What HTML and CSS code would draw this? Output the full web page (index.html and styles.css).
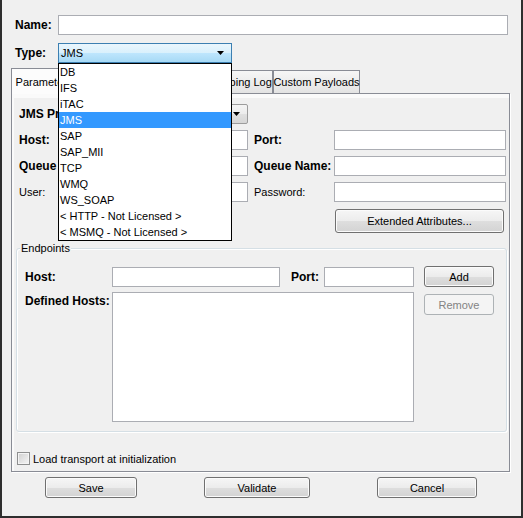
FILE: index.html
```html
<!DOCTYPE html>
<html>
<head>
<meta charset="utf-8">
<title>Transport</title>
<link rel="stylesheet" href="styles.css">
</head>
<body>
<div class="window">
  <div class="row top-row">
    <span class="b top-lbl">Name:</span>
    <div class="field name-field"></div>
  </div>
  <div class="row top-row type-row">
    <span class="b top-lbl">Type:</span>
    <div class="combo-wrap">
      <div class="combo combo-hot">
        <span>JMS</span>
        <svg class="arrow" width="7" height="4" viewBox="0 0 7 4"><path d="M0 0h7L3.5 4z"/></svg>
      </div>
      <ul class="dropdown">
        <li>DB</li>
        <li>IFS</li>
        <li>iTAC</li>
        <li class="sel">JMS</li>
        <li>SAP</li>
        <li>SAP_MII</li>
        <li>TCP</li>
        <li>WMQ</li>
        <li>WS_SOAP</li>
        <li>&lt; HTTP - Not Licensed &gt;</li>
        <li>&lt; MSMQ - Not Licensed &gt;</li>
      </ul>
    </div>
  </div>

  <div class="tabs">
    <div class="tabstrip">
      <div class="tab tab-active t1">Parameters</div>
      <div class="tab t2">Transformations</div>
      <div class="tab t3">Mapping Log</div>
      <div class="tab t4">Custom Payloads</div>
    </div>
    <div class="panel">
      <div class="form-grid">
        <span class="b c1">JMS Provider:</span>
        <div class="combo combo-btn">
          <span>ActiveMQ</span>
          <svg class="arrow" width="7" height="4" viewBox="0 0 7 4"><path d="M0 0h7L3.5 4z"/></svg>
        </div>
        <span class="b c1">Host:</span>
        <div class="field w-left"></div>
        <span class="b">Port:</span>
        <div class="field w-right"></div>
        <span class="b c1">Queue Manager:</span>
        <div class="field w-left"></div>
        <span class="b">Queue Name:</span>
        <div class="field w-right"></div>
        <span class="c1">User:</span>
        <div class="field w-left"></div>
        <span>Password:</span>
        <div class="field w-right"></div>
      </div>

      <div class="ext-row">
        <button class="btn ext-btn">Extended Attributes...</button>
      </div>

      <div class="group">
        <span class="legend">Endpoints</span>
        <div class="grp-row1">
          <span class="b grp-lbl">Host:</span>
          <div class="field ep-host"></div>
          <span class="b ep-port-lbl">Port:</span>
          <div class="field ep-port"></div>
          <button class="btn side-btn">Add</button>
        </div>
        <div class="grp-row2">
          <span class="b grp-lbl defined-lbl">Defined Hosts:</span>
          <div class="field host-list"></div>
          <button class="btn side-btn btn-disabled remove-btn">Remove</button>
        </div>
      </div>

      <label class="check-row">
        <span class="checkbox"></span>
        <span class="check-text">Load transport at initialization</span>
      </label>
    </div>
  </div>

  <div class="button-row">
    <button class="btn save-btn">Save</button>
    <button class="btn validate-btn">Validate</button>
    <button class="btn cancel-btn">Cancel</button>
  </div>
</div>
</body>
</html>
```

FILE: styles.css
```css
* { box-sizing: border-box; }

html, body {
  margin: 0;
  padding: 0;
}

body {
  width: 523px;
  height: 518px;
  overflow: hidden;
  background: #f0f0f0;
  font-family: "Liberation Sans", Arial, sans-serif;
  font-size: 11px;
  color: #000;
}

.window {
  width: 523px;
  height: 518px;
  border: 2px solid #2e2e2e;
  border-top: 0;
  padding-top: 15px;
  background: #f0f0f0;
}

.row {
  display: flex;
  align-items: center;
}

.top-row {
  height: 20px;
  padding-left: 13px;
}

.type-row {
  margin-top: 8px;
}

.top-lbl {
  width: 43px;
}

.b {
  font-weight: bold;
  font-size: 12px;
}

.form-grid span,
.grp-lbl,
.ep-port-lbl {
  white-space: nowrap;
  overflow: hidden;
}

.field {
  height: 20px;
  background: #fff;
  border: 1px solid #abadb3;
}

.name-field {
  width: 450px;
}

/* combo boxes */
.combo-wrap {
  position: relative;
  width: 174px;
  height: 20px;
}

.combo {
  display: flex;
  align-items: center;
  justify-content: space-between;
  height: 20px;
  padding: 0 7px 0 2px;
}

.combo-hot {
  border: 1px solid #3c7fb1;
  background: linear-gradient(#eaf6fd, #d9f0fc 50%, #bee6fd 50%, #a7d9f5);
}

.combo-btn {
  width: 136px;
  border: 1px solid #9c9c9c;
  border-radius: 2px;
  background: linear-gradient(#f4f4f4, #ececec 50%, #e0e0e0 50%, #d6d6d6);
}

.arrow {
  display: block;
  fill: #000;
}

.dropdown {
  position: absolute;
  top: 20px;
  left: 0;
  width: 174px;
  margin: 0;
  padding: 0;
  list-style: none;
  background: #fff;
  border: 1px solid #000;
  z-index: 10;
}

.dropdown li {
  height: 16px;
  line-height: 16px;
  padding-left: 1px;
  white-space: nowrap;
}

.dropdown .sel {
  background: #3399ff;
  color: #fff;
}

/* tabs */
.tabs {
  margin: 5px 0 0 9px;
  width: 499px;
}

.tabstrip {
  display: flex;
  align-items: flex-end;
  height: 25px;
}

.tab {
  height: 23px;
  border: 1px solid #898c95;
  border-bottom: 0;
  background: linear-gradient(#f6f6f6, #e3e3e3);
  display: flex;
  align-items: center;
  justify-content: center;
  white-space: nowrap;
}

.tab-active {
  height: 26px;
  margin-bottom: -1px;
  background: #fcfcfc;
  position: relative;
  z-index: 1;
}

.t1 { width: 66px; }
.t2 { width: 130px; }
.t3 { width: 66px; }
.t4 { width: 87px; }

.panel {
  height: 379px;
  border: 1px solid #898c95;
  box-shadow: inset 2px 4px 0 #fafafa, 1px 1px 0 #fff;
  padding: 10px 3px 0 0;
}

.form-grid {
  display: grid;
  grid-template-columns: 93px 142px 80px 172px;
  grid-auto-rows: 20px;
  row-gap: 6px;
  margin-left: 7px;
  align-items: center;
}

.c1 { grid-column: 1; }

.w-left { width: 136px; }
.w-right { width: 172px; }

.ext-row {
  display: flex;
  justify-content: flex-end;
  margin-top: 7px;
  padding-right: 2px;
}

/* buttons */
.btn {
  font-family: inherit;
  font-size: 11px;
  color: #000;
  padding: 0;
  border: 1px solid #707070;
  border-radius: 3px;
  background: linear-gradient(#f6f6f6, #ececec 50%, #dedede 51%, #d3d3d3);
  box-shadow: inset 0 0 0 1px #fbfbfb;
}

.btn-disabled {
  color: #838383;
  border-color: #adb2b5;
  background: #f4f4f4;
  box-shadow: none;
}

.ext-btn {
  width: 169px;
  height: 24px;
}

/* endpoints group */
.group {
  position: relative;
  margin: 15px 0 0 4px;
  width: 491px;
  height: 184px;
  border: 1px solid #d5dfe5;
  border-radius: 3px;
  box-shadow: inset 1px 1px 0 #fff, 1px 1px 0 #fff;
  padding: 17px 0 0 8px;
}

.legend {
  position: absolute;
  top: -7px;
  left: 3px;
  padding: 0 1px;
  line-height: 13px;
  background: #f0f0f0;
}

.grp-row1 {
  display: flex;
  align-items: center;
  height: 21px;
}

.grp-row2 {
  display: flex;
  align-items: flex-start;
  margin-top: 5px;
}

.grp-lbl {
  width: 87px;
}

.defined-lbl {
  padding-top: 2px;
}

.ep-host { width: 168px; }

.ep-port-lbl {
  width: 33px;
  margin-left: 11px;
}

.ep-port { width: 90px; }

.host-list {
  width: 302px;
  height: 130px;
}

.side-btn {
  width: 70px;
  height: 21px;
  margin-left: 10px;
}

.remove-btn {
  margin-top: 2px;
}

/* checkbox */
.check-row {
  display: flex;
  align-items: center;
  margin: 20px 0 0 5px;
  height: 13px;
}

.checkbox {
  width: 13px;
  height: 13px;
  border: 1px solid #8e8f8f;
  background: linear-gradient(135deg, #cfcfcf, #f6f6f6);
  box-shadow: inset 0 0 0 1px #f4f4f4;
}

.check-text {
  margin-left: 3px;
}

/* bottom buttons */
.button-row {
  display: flex;
  margin-top: 5px;
}

.button-row .btn {
  height: 21px;
}

.save-btn {
  width: 92px;
  margin-left: 43px;
}

.validate-btn {
  width: 106px;
  margin-left: 67px;
}

.cancel-btn {
  width: 100px;
  margin-left: 67px;
}
```
